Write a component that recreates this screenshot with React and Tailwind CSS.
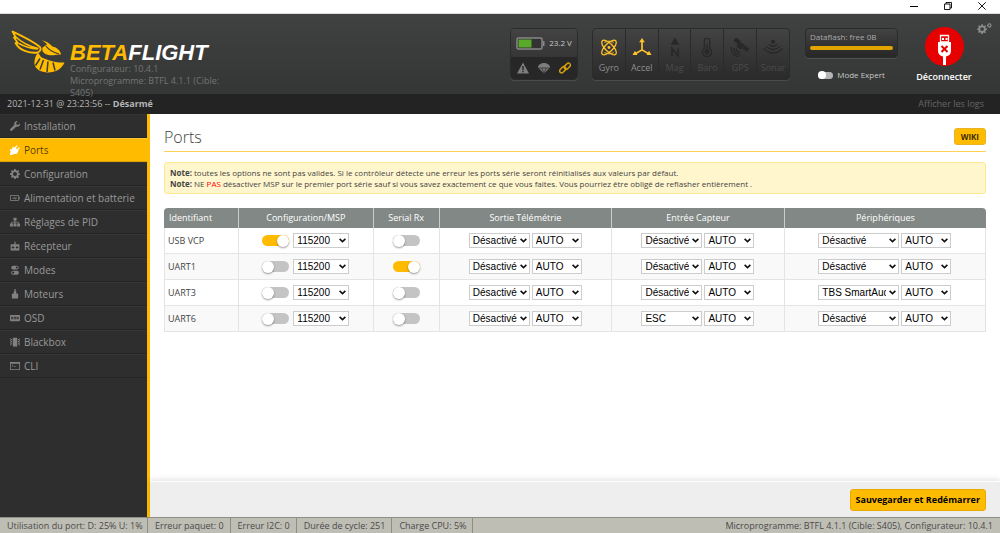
import { useState } from 'react'

const TABS = [
  { name: 'Installation', icon: 'wrench' },
  { name: 'Ports', icon: 'plug' },
  { name: 'Configuration', icon: 'gear' },
  { name: 'Alimentation et batterie', icon: 'battery' },
  { name: 'Réglages de PID', icon: 'tree' },
  { name: 'Récepteur', icon: 'receiver' },
  { name: 'Modes', icon: 'modes' },
  { name: 'Moteurs', icon: 'motor' },
  { name: 'OSD', icon: 'osd' },
  { name: 'Blackbox', icon: 'blackbox' },
  { name: 'CLI', icon: 'cli' },
]

const SENSORS = [
  { name: 'Gyro', icon: 'gyro', on: true },
  { name: 'Accel', icon: 'accel', on: true },
  { name: 'Mag', icon: 'mag' },
  { name: 'Baro', icon: 'baro' },
  { name: 'GPS', icon: 'gps' },
  { name: 'Sonar', icon: 'sonar' },
]

const PORTS = [
  { id: 'USB VCP', msp: true, rx: false, sensor: 'Désactivé', peripheral: 'Désactivé' },
  { id: 'UART1', msp: false, rx: true, sensor: 'Désactivé', peripheral: 'Désactivé' },
  { id: 'UART3', msp: false, rx: false, sensor: 'Désactivé', peripheral: 'TBS SmartAudio' },
  { id: 'UART6', msp: false, rx: false, sensor: 'ESC', peripheral: 'Désactivé' },
]

const STATUS = ['Erreur paquet: 0', 'Erreur I2C: 0', 'Durée de cycle: 251', 'Charge CPU: 5%']

const GEAR =
  'M6.8 0h2.4l.4 2.1 1.6.7L13 1.6 14.6 3.3l-1.3 1.8.6 1.5 2.1.4v2.3l-2.1.4-.7 1.6 1.2 1.8-1.6 1.6-1.8-1.2-1.5.7L9.2 16H6.8l-.4-2.1-1.6-.6L3 14.5l-1.6-1.7 1.2-1.7-.7-1.6L0 9.2V6.9l2-.4.7-1.6L1.5 3.2 3.2 1.5 5 2.8l1.5-.7zM8 4.8a3.2 3.2 0 1 0 0 6.4 3.2 3.2 0 0 0 0-6.4z'

function TabIcon({ name }) {
  return (
    <svg className="h-[10px] w-[10px] shrink-0" viewBox="0 0 16 16" fill="currentColor" fillRule="evenodd">
      {name === 'wrench' && <path d="M15.7 3.6 13 6.2l-2.6-.7-.6-2.6L12.4.3C10.3-.4 8 .6 7.1 2.6c-.5 1.1-.5 2.2-.1 3.2L.7 12.200a1.900 1.900 0 0 0 0 2.800 2 2 0 0 0 2.900.2L9.900 9c2.500.9 5.300-.6 6-3.200.2-.8.100-1.500-.2-2.200z" />}
      {name === 'plug' && <path d="M10.8.3l1.4 1.4-2.9 2.900 2 2 2.900-2.900 1.500 1.500-2.900 2.900 1.200 1.200-1.300 1.300c-.6 3.200-3.900 4.600-6.600 3.300L3.600 16H0v-3.300l2-2L1.200 9.800 0 10V6.500l3 .8L4.200 3l2.300.8 1.400-.6z" />}
      {name === 'gear' && <path d={GEAR} />}
      {name === 'battery' && (
        <g fill="none" stroke="currentColor" strokeWidth="1.3">
          <path d="M.7 4h13v8H.7zM14.500 6.500h1v3h-1" />
          <path d="M4 8.500h2.500l1-2 1 3.500 1-2H11" />
        </g>
      )}
      {name === 'tree' && <path d="M5.500 1h5v4.500H8.800v2h5v3H16V15h-4.500v-4.500h1V8.800H8.800v1.700h1.700V15h-5v-4.500h1.700V8.800H3.500v1.700h1V15H0v-4.500h2.200v-3h5v-2H5.500z" />}
      {name === 'receiver' && <path d="M7 1h2v4h6v10H1V5h6zM4 8v1.500H2.800V11H4v1.500h1.500V11h1.300V9.500H5.500V8zm6.500 0v1.500H9.300V11h1.200v1.500H12V11h1.300V9.500H12V8z" />}
      {name === 'modes' && (
        <path d="M5 1h6a3 3 0 0 1 0 6H5a3 3 0 0 1 0-6zm6 1.300a1.700 1.700 0 1 0 0 3.400 1.700 1.700 0 0 0 0-3.400zM5 9h6a3 3 0 0 1 0 6.500H5A3 3 0 0 1 5 9zm0 1.400a1.800 1.800 0 1 0 0 3.600 1.800 1.800 0 0 0 0-3.600z" />
      )}
      {name === 'motor' && <path d="M7 0h2v3l1 1v3h2l1 1.500V15H3V8.500L4 7h2V4l1-1z" />}
      {name === 'osd' && <path d="M1 3h14l1 1v8l-1 1H1l-1-1V4zm1 3v4h3.500V6zm1.200 1.200h1.100v1.600H3.200zM6.500 6v2.500h2V9h-2v1h3V7.500h-2V7h2V6zm4 0v4H13l1-1V7l-1-1zm1.200 1.200h1v1.600h-1z" />}
      {name === 'blackbox' && <path d="M4.500 1h7v14h-7zM1.500 3h1.800v2H1.500zm0 3.500h1.800v2H1.500zm0 3.500h1.800v2H1.500zM12.700 3h1.800v2h-1.800zm0 3.500h1.800v2h-1.800zm0 3.500h1.800v2h-1.800zM0 2h.8v12H0zm15.200 0h.8v12h-.8z" />}
      {name === 'cli' && <path d="M0 1.500h16v13H0zm1.300 3v8.700h13.400V4.500zM3 5.500l2.500 1.700L3 9V7.800L4 7.200l-1-.6zM6 8.500h3v1.200H6z" />}
    </svg>
  )
}

function SensorIcon({ name }) {
  return (
    <svg className="h-5 w-5" viewBox="0 0 20 20" fill="none" stroke="currentColor" strokeWidth="1.4">
      {name === 'gyro' && (
        <>
          <ellipse cx="10" cy="10" rx="10" ry="4.2" transform="rotate(45 10 10)" />
          <ellipse cx="10" cy="10" rx="10" ry="4.2" transform="rotate(-45 10 10)" />
          <path d="M5 4.500q5-2.500 10 0M5 15.500q5 2.500 10 0" strokeWidth="1" />
          <circle cx="10" cy="10" r="1.500" fill="currentColor" stroke="none" />
        </>
      )}
      {name === 'accel' && (
        <>
          <path d="M10 3v9.500M10 12.500l-7 4M10 12.500l7 4" strokeWidth="1.800" />
          <path d="M10 0l3 4.500H7zM0 17.800l2.600-4.500 2.600 4.500zM20 17.800l-2.600-4.500-2.600 4.500z" fill="currentColor" stroke="none" />
        </>
      )}
      {name === 'mag' && (
        <>
          <path d="M10-1l4.500 8h-9z" fill="currentColor" stroke="none" />
          <path d="M6.800 19v-8l6.400 8v-8" strokeWidth="1.700" />
        </>
      )}
      {name === 'baro' && (
        <>
          <path d="M7.200 11V2.800a2.800 2.800 0 0 1 5.600 0V11a4.800 4.800 0 1 1-5.600 0z" />
          <circle cx="10" cy="14.800" r="2.600" fill="currentColor" stroke="none" />
          <path d="M10 13V6" />
        </>
      )}
      {name === 'gps' && (
        <>
          <path d="M6-.5l4.500 3.300L8 6.500 3 3zM14.500 7.500l5.500 3.500-2.500 3.500-5-3.300zM9.500 3.800l5 3.400-3.500 5.200-5-3.400z" fill="currentColor" stroke="none" />
          <path d="M6.500 11a3 3 0 0 0 3.500 4M3.800 10.500a6 6 0 0 0 6.500 7M1 9.500A8.800 8.800 0 0 0 9 19.800" />
        </>
      )}
      {name === 'sonar' && (
        <>
          <path d="M0 11q10 9.500 20 0M2.800 8.800q7.200 7.200 14.400 0M5.500 6.500q4.500 4.500 9 0" />
          <circle cx="10" cy="4" r="2.200" fill="currentColor" stroke="none" />
        </>
      )}
    </svg>
  )
}

function BeeLogo() {
  return (
    <svg className="h-11 w-[54px] shrink-0" viewBox="0 0 54 44" fill="none" stroke="#ffbb00" strokeLinejoin="round">
      <path d="M1.500 1.500C9 5 21 10.500 29 17c1.500 2.500 0 4.500-2.500 5.500C20 23.500 8.500 21 4.500 13l2.500.3L3 7.500l2 .3z" strokeWidth="1.800" />
      <path d="M5 7c6 6 14 9.500 22.500 11.500M8 13.500c6 3.500 12 5 19 5.500" strokeWidth="1.500" />
      <path d="M30 10c4.500 1 8.500 3 11.500 6.500 4.500 1 8 4 8.500 8-5-.5-8 1.500-12.500.5-5-1-7-4-6-7.500l4.500-3c-1.500-2-3.500-3.500-6-4.500z" fill="#ffbb00" stroke="none" />
      <path d="M35 16c3 4.500 8 6.500 13 8" stroke="#3a3c3b" strokeWidth="1.200" />
      <path d="M27 22.500l3 4.500c7 3.500 16 6 23.500 5.500-3 7.500-11 10.800-19 9.800C27 41.500 22.500 37 23.500 31c.4-3 1.500-6 3.500-8.500z" fill="#ffbb00" stroke="none" />
      <path d="M29 28.500l-4.500 7M32.500 30l-3.500 9.500M37 31.500L36 42M42 32.500l2 8" stroke="#3a3c3b" strokeWidth="1.500" />
    </svg>
  )
}

function Toggle({ label, defaultChecked }) {
  return (
    <input
      type="checkbox"
      aria-label={label}
      defaultChecked={defaultChecked}
      className="flex h-[11px] w-[27px] shrink-0 appearance-none items-center rounded-full bg-[#c4c4c4] before:h-[12px] before:w-[12px] before:shrink-0 before:rounded-full before:bg-white before:shadow-[0_1px_2px_rgba(0,0,0,0.4)] checked:justify-end checked:bg-[#ffbb00]"
    />
  )
}

function Select({ label, options, value, width }) {
  return (
    <span className={`relative block ${width}`}>
      <select
        aria-label={label}
        defaultValue={value}
        className="block h-[15px] w-full appearance-none overflow-hidden border border-[#ccc] bg-white py-0 pr-3 pl-[3px] font-['Liberation_Sans',sans-serif] text-[10px] leading-[13px] text-black"
      >
        {options.map(o => (
          <option key={o}>{o}</option>
        ))}
      </select>
      <svg
        className="pointer-events-none absolute top-[5px] right-[3px] h-[5px] w-[7px]"
        viewBox="0 0 7 5"
        fill="none"
        stroke="#111"
        strokeWidth="1.6"
      >
        <path d="M.6.9l2.900 2.700L6.400.9" />
      </svg>
    </span>
  )
}

function BaudSelect({ label }) {
  return <Select label={label} options={['AUTO', '9600', '115200']} value="AUTO" width="w-[50px]" />
}

function PortRow({ port }) {
  const cell = 'h-[26px] border-b border-l border-[#e4e4e4] p-0 last:border-r'
  return (
    <tr className="even:bg-[#f9f9f9]">
      <td className={`${cell} pl-[3px]! text-[9px]`}>{port.id}</td>
      <td className={cell}>
        <div className="flex items-center justify-center gap-1">
          <Toggle label={`MSP ${port.id}`} defaultChecked={port.msp} />
          <Select label={`Vitesse MSP ${port.id}`} options={['9600', '115200', '500000']} value="115200" width="w-[56px]" />
        </div>
      </td>
      <td className={cell}>
        <div className="flex justify-center">
          <Toggle label={`Serial Rx ${port.id}`} defaultChecked={port.rx} />
        </div>
      </td>
      <td className={cell}>
        <div className="flex justify-center gap-0.5">
          <Select label={`Télémétrie ${port.id}`} options={['Désactivé', 'MAVLink']} value="Désactivé" width="w-[61px]" />
          <BaudSelect label={`Vitesse télémétrie ${port.id}`} />
        </div>
      </td>
      <td className={cell}>
        <div className="flex justify-center gap-0.5">
          <Select label={`Capteur ${port.id}`} options={['Désactivé', 'ESC', 'GPS']} value={port.sensor} width="w-[61px]" />
          <BaudSelect label={`Vitesse capteur ${port.id}`} />
        </div>
      </td>
      <td className={cell}>
        <div className="flex justify-center gap-0.5">
          <Select
            label={`Périphérique ${port.id}`}
            options={['Désactivé', 'TBS SmartAudio']}
            value={port.peripheral}
            width="w-[81px]"
          />
          <BaudSelect label={`Vitesse périphérique ${port.id}`} />
        </div>
      </td>
    </tr>
  )
}

function TitleBar() {
  return (
    <div className="flex h-[14px] shrink-0 items-start justify-end gap-[26px] border-b border-[#ddd] bg-white pt-[2px] pr-[14px] text-black">
      <button aria-label="Réduire">
        <svg className="block h-2 w-2" viewBox="0 0 8 8" stroke="currentColor"><path d="M0 4.500h8" /></svg>
      </button>
      <button aria-label="Restaurer">
        <svg className="block h-2 w-2" viewBox="0 0 8 8" fill="none" stroke="currentColor" strokeWidth=".9"><path d="M.5 2h5.500v5.500H.5zM2 2V.5h5.500V6H6" /></svg>
      </button>
      <button aria-label="Fermer">
        <svg className="block h-2 w-2" viewBox="0 0 8 8" stroke="currentColor" strokeWidth=".9"><path d="M.3.3l7.400 7.400M7.700.3L.3 7.700" /></svg>
      </button>
    </div>
  )
}

function Header() {
  return (
    <header className="flex h-20 shrink-0 items-start bg-linear-to-b from-[#404241] to-[#343635] pr-2">
      <div className="relative z-10 flex flex-1 items-start pt-4 pl-[11px]">
        <BeeLogo />
        <div className="w-[160px] pt-[13px] pl-[5px]">
          <div className="font-['Liberation_Sans',sans-serif] text-[22px] leading-[20px] font-bold text-white italic">
            <span className="text-[#ffbb00]">BETA</span>FLIGHT
          </div>
          <p className="text-[9px] leading-3 text-[#747474]">
            Configurateur: 10.4.1
            <br />
            Microprogramme: BTFL 4.1.1 (Cible: S405)
          </p>
        </div>
      </div>

      {/* battery + flags */}
      <div className="mt-[14px] flex h-[52px] w-[68px] flex-col overflow-hidden rounded-[4px] border border-[#2b2b2b] bg-[#434343] shadow-[0_1px_0_rgba(255,255,255,0.1)]">
        <div className="flex h-[28px] items-center justify-center gap-1 bg-linear-to-b from-[#434343] to-[#363636] text-[8px] text-[#c8c8c8]">
          <svg className="h-[13px] w-[29px]" viewBox="0 0 29 13">
            <rect x="1" y="1" width="25" height="11" rx="1.500" fill="#333" stroke="#888" strokeWidth="1.500" />
            <path d="M27 4h1.500v5H27z" fill="#888" />
            <path d="M2.500 2.500h13v8h-13z" fill="#59aa29" />
          </svg>
          23.2 V
        </div>
        <div className="flex flex-1 items-center justify-center gap-[9px] bg-[#272727] text-[#7d7d7d]">
          <svg className="h-3 w-3" viewBox="0 0 12 12" fill="currentColor" fillRule="evenodd"><path d="M6 .5l6 11H0zM5.300 4v4h1.400V4zm0 4.800v1.400h1.400V8.800z" /></svg>
          <svg className="h-3 w-3" viewBox="0 0 12 12">
            <path d="M0 5.500C.3-.5 11.700-.5 12 5.500L6 11.500z" fill="currentColor" />
            <path d="M.5 6h11M3.700 6L6 11l2.300-5" stroke="#272727" strokeWidth=".7" fill="none" />
          </svg>
          <svg className="h-3 w-3" viewBox="0 0 12 12" fill="none" stroke="#d69d0c" strokeWidth="1.500">
            <rect x="4.800" y="2.200" width="7" height="4" rx="2" transform="rotate(-45 8.300 4.200)" />
            <rect x=".2" y="5.800" width="7" height="4" rx="2" transform="rotate(-45 3.700 7.800)" />
          </svg>
        </div>
      </div>

      <ul className="mt-[14px] ml-[14px] flex h-[52px] w-[198px] overflow-hidden rounded-[4px] border border-[#2b2b2b] bg-linear-to-b from-[#434343] to-[#2a2a2a] shadow-[0_1px_0_rgba(255,255,255,0.1)]">
        {SENSORS.map(s => (
          <li
            key={s.name}
            className={`flex flex-1 flex-col items-center border-r border-[#2b2b2b] pt-[9px] last:border-r-0 ${s.on ? 'text-[#ffc22b]' : 'text-[#282828]'}`}
          >
            <SensorIcon name={s.icon} />
            <span className={`text-[9px] leading-[22px] ${s.on ? 'text-[#8e8e8e]' : 'text-[#4b4b4b]'}`}>{s.name}</span>
          </li>
        ))}
      </ul>

      <div className="mt-[14px] ml-[15px] flex w-[93px] flex-col items-center gap-3">
        <div className="h-[30px] w-full rounded-[4px] border border-[#2b2b2b] bg-linear-to-b from-[#434343] to-[#272727] px-1 pt-px shadow-[0_1px_0_rgba(255,255,255,0.1)]">
          <p className="text-[8px] leading-[14px] whitespace-nowrap text-[#aaa]">Dataflash: free 0B</p>
          <div className="mt-[2px] h-1 rounded-full bg-[#e2a500]" />
        </div>
        <label className="flex items-center gap-1 text-[8px] leading-[10px] whitespace-nowrap text-[#c8c8c8]">
          <input
            type="checkbox"
            className="flex h-[7px] w-[15px] appearance-none items-center rounded-full bg-[#b5b5b5] before:h-2 before:w-2 before:rounded-full before:bg-white checked:justify-end checked:bg-[#ffbb00]"
          />
          Mode Expert
        </label>
      </div>

      <button className="mt-[13px] ml-[18px] flex w-[56px] flex-col items-center text-[9px] font-semibold text-white">
        <svg className="h-[39px] w-[39px]" viewBox="0 0 39 39">
          <circle cx="19.500" cy="19.500" r="19.500" fill="#e60000" />
          <path d="M15.500 8.500h8V15h-8z" fill="none" stroke="#fff" strokeWidth="1.300" />
          <path d="M17 11h2v2h-2zM20.500 11h2v2h-2zM13 15h13v9c0 3-2 5-5 5.500V38h-3v-8.500c-3-.5-5-2.500-5-5.500z" fill="#fff" />
          <path d="M16.500 19l6 6M22.500 19l-6 6" stroke="#e60000" strokeWidth="2" />
        </svg>
        <span className="leading-[22px]">Déconnecter</span>
      </button>
      <button aria-label="Options" className="mt-[9px] ml-[5px] text-[#8a8c8b]">
        <svg className="block h-[11px] w-[15px]" viewBox="0 0 24 18" fill="currentColor" fillRule="evenodd">
          <path d={GEAR} transform="translate(0 2)" />
          <path d={GEAR} transform="translate(16 0) scale(.5)" />
        </svg>
      </button>
    </header>
  )
}

export default function App() {
  const [active, setActive] = useState('Ports')

  return (
    <div className="flex min-h-screen flex-col bg-white font-['Open_Sans',sans-serif] text-[#444]">
      <TitleBar />
      <Header />
      <div className="flex h-5 shrink-0 items-center justify-between bg-[#232323] pr-4 pl-[7px] text-[9px] text-[#b5b5b5]">
        <p>
          2021-12-31 @ 23:23:56 -- <b>Désarmé</b>
        </p>
        <button className="text-[#666]">Afficher les logs</button>
      </div>

      <div className="flex flex-1">
        <nav className="w-[150px] shrink-0 border-r-3 border-[#ffbb00] bg-[#2e2e2e]">
          <ul>
            {TABS.map(t => (
              <li key={t.name}>
                <a
                  href="#"
                  onClick={() => setActive(t.name)}
                  className={`flex h-[24px] items-center gap-1 border-t border-b pl-[10px] text-[10px] whitespace-nowrap ${
                    t.name === active
                      ? 'border-t-[#ffc936] border-b-[#dba100] bg-[#ffbb00] text-black/70'
                      : 'border-t-[#353535] border-b-[#242424] text-[#999]'
                  }`}
                >
                  <span className={t.name === active ? 'text-white' : 'text-[#818181]'}>
                    <TabIcon name={t.icon} />
                  </span>
                  {t.name}
                </a>
              </li>
            ))}
          </ul>
        </nav>

        <main className="flex min-w-0 flex-1 flex-col">
          <div className="flex-1 px-[14px] pt-[14px]">
            <div className="flex h-[23px] items-start justify-between">
              <h1 className="text-[16px] leading-[18px] font-light">Ports</h1>
              <a
                href="#"
                className="flex h-[17px] items-center rounded-[3px] border border-[#e8b423] bg-[#ffbb00] px-[6px] text-[8px] font-bold text-black/80"
              >
                WIKI
              </a>
            </div>
            <div className="mb-[10px] h-px bg-[#ffd056]" />

            <div className="rounded-[3px] border border-[#ffe88f] bg-[#fff6cd] px-[5px] py-1 text-[8px] leading-[11px]">
              <p>
                <b>Note:</b> toutes les options ne sont pas valides. Si le contrôleur détecte une erreur les ports série seront
                réinitialisés aux valeurs par défaut.
              </p>
              <p>
                <b>Note:</b> NE <span className="text-[#f00]">PAS</span> désactiver MSP sur le premier port série sauf si vous
                savez exactement ce que vous faites. Vous pourriez être obligé de reflasher entièrement .
              </p>
            </div>

            <table className="mt-[14px] w-full table-fixed border-separate border-spacing-0">
              <thead>
                <tr className="h-[20px] text-[9px] text-white [&>th]:border-l [&>th]:border-[#ccc] [&>th]:bg-[#828885] [&>th]:p-0 [&>th]:font-normal">
                  <th className="w-[9%] rounded-tl-[4px] border-l-0! pl-[5px]! text-left">Identifiant</th>
                  <th className="w-[16.4%]">Configuration/MSP</th>
                  <th className="w-[8%]">Serial Rx</th>
                  <th className="w-[21%]">Sortie Télémétrie</th>
                  <th className="w-[21%]">Entrée Capteur</th>
                  <th className="rounded-tr-[4px]">Périphériques</th>
                </tr>
              </thead>
              <tbody>
                {PORTS.map(p => (
                  <PortRow key={p.id} port={p} />
                ))}
              </tbody>
            </table>
          </div>

          <div className="flex h-9 items-center justify-end border-t border-white bg-[#eee] pr-[14px] shadow-[0_-2px_5px_rgba(0,0,0,0.1)]">
            <button className="h-[22px] rounded-[3px] border border-[#e8aa00] bg-[#ffbb00] px-[5px] text-[9px] font-bold text-black">
              Sauvegarder et Redémarrer
            </button>
          </div>
        </main>
      </div>

      <footer className="flex h-4 shrink-0 items-center border-t border-[#8e8e87] bg-[#bfbeb5] text-[9px] leading-[15px] whitespace-nowrap text-[#4a4a4a]">
        <span className="w-[148px] border-r border-[#8e8e87] pl-[7px]">Utilisation du port: D: 25% U: 1%</span>
        {STATUS.map(s => (
          <span key={s} className="border-r border-[#8e8e87] pr-[6px] pl-[7px]">
            {s}
          </span>
        ))}
        <span className="ml-auto pr-[7px]">Microprogramme: BTFL 4.1.1 (Cible: S405), Configurateur: 10.4.1</span>
      </footer>
    </div>
  )
}
